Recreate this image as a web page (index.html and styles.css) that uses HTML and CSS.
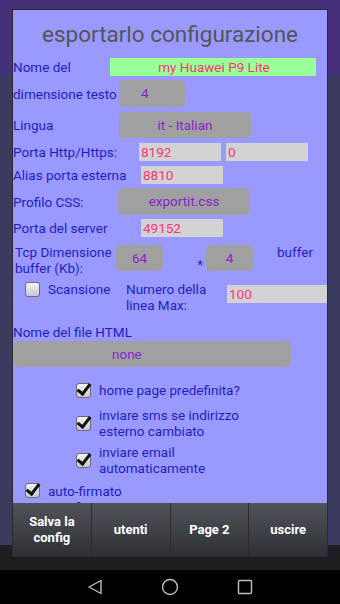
FILE: index.html
```html
<!DOCTYPE html>
<html lang="it">

<head>
    <meta charset="UTF-8">
    <meta name="viewport" content="width=device-width, initial-scale=1.0">
    <title>esportarlo configurazione</title>
    <link rel="stylesheet" href="styles.css">
</head>

<body>
    <div id="screen">
        <div class="backdrop">
            <div class="dialog">
                <div class="dialog-body">
                    <h1 class="dialog-title">esportarlo configurazione</h1>

                    <div class="row row-name">
                        <span class="label">Nome del</span>
                        <span class="field field-green">my Huawei P9 Lite</span>
                    </div>

                    <div class="row row-size">
                        <span class="label">dimensione testo</span>
                        <span class="btn btn-small">4</span>
                    </div>

                    <div class="row row-lang">
                        <span class="label">Lingua</span>
                        <span class="btn btn-wide">it - Italian</span>
                    </div>

                    <div class="row row-http">
                        <span class="label">Porta Http/Https:</span>
                        <span class="field field-port">8192</span>
                        <span class="field field-port field-second">0</span>
                    </div>

                    <div class="row row-alias">
                        <span class="label">Alias porta esterna</span>
                        <span class="field field-port">8810</span>
                    </div>

                    <div class="row row-css">
                        <span class="label">Profilo CSS:</span>
                        <span class="btn btn-wide">exportit.css</span>
                    </div>

                    <div class="row row-server">
                        <span class="label">Porta del server</span>
                        <span class="field field-port">49152</span>
                    </div>

                    <div class="row row-tcp">
                        <span class="label">Tcp Dimensione buffer (Kb):</span>
                        <span class="btn btn-tcp">64</span>
                        <span class="times">*</span>
                        <span class="btn btn-tcp">4</span>
                        <span class="label-buffer">buffer</span>
                    </div>

                    <div class="row row-scan">
                        <span class="check"></span>
                        <span class="label label-scan">Scansione</span>
                        <span class="label label-lines">Numero della linea Max:</span>
                        <span class="field field-lines">100</span>
                    </div>

                    <div class="html-label">Nome del file HTML</div>
                    <div class="btn btn-html">none</div>

                    <div class="options">
                        <div class="option">
                            <span class="check checked"></span>
                            <span class="option-text">home page predefinita?</span>
                        </div>
                        <div class="option option-sms">
                            <span class="check checked"></span>
                            <span class="option-text">inviare sms se indirizzo<br>esterno cambiato</span>
                        </div>
                        <div class="option option-mail">
                            <span class="check checked"></span>
                            <span class="option-text">inviare email<br>automaticamente</span>
                        </div>
                        <div class="option option-left">
                            <span class="check checked"></span>
                            <span class="option-text">auto-firmato<br>certificato??</span>
                        </div>
                    </div>
                </div>

                <div class="dialog-buttons">
                    <button class="action">Salva la<br>config</button>
                    <button class="action">utenti</button>
                    <button class="action">Page 2</button>
                    <button class="action">uscire</button>
                </div>
            </div>
        </div>

        <div class="navbar">
            <svg width="16" height="16" viewBox="0 0 16 16">
                <path d="M14 1.5 L2 8 L14 14.5 Z" fill="none" stroke="#bdbdbd" stroke-width="1.4" stroke-linejoin="round" />
            </svg>
            <svg width="18" height="18" viewBox="0 0 18 18">
                <circle cx="9" cy="9" r="7.5" fill="none" stroke="#bdbdbd" stroke-width="1.4" />
            </svg>
            <svg width="16" height="16" viewBox="0 0 16 16">
                <rect x="1.5" y="1.5" width="13" height="13" rx="1" fill="none" stroke="#bdbdbd" stroke-width="1.4" />
            </svg>
        </div>
    </div>
</body>

</html>
```

FILE: styles.css
```css
body {
    margin: 0;
    font-family: Roboto, "Liberation Sans", sans-serif;
    background-color: #000;
}

#screen {
    width: 340px;
    height: 604px;
    overflow: hidden;
}

.backdrop {
    height: 561px;
    padding: 9px 12px 0;
    background: linear-gradient(#45307a 0, #45307a 75px, #3b3b5d 75px, #3b3b5d 545px, #1e1f22 545px);
}

.dialog {
    width: 314px;
    border: 1px solid #2b2b2e;
    background-color: #2b2b2e;
}

.dialog-body {
    height: 493px;
    overflow: hidden;
    background-color: #9999ff;
    color: #1f1fbf;
    font-size: 13.5px;
}

.dialog-title {
    margin: 0;
    height: 48px;
    line-height: 48px;
    text-align: center;
    font-size: 22.5px;
    font-weight: normal;
    color: #555;
}

.row {
    display: flex;
    align-items: center;
}

.label {
    flex: none;
    line-height: 16px;
}

.field {
    height: 18px;
    line-height: 18px;
    color: #ff3377;
    background-color: #d3d3d3;
    padding-left: 2px;
    box-sizing: border-box;
}

.btn {
    height: 26px;
    line-height: 26px;
    border-radius: 5px;
    background-color: #a0a0a0;
    color: #8a1fd0;
    text-align: center;
    box-sizing: border-box;
}

.row-name {
    height: 18px;
}

.row-name .label {
    width: 97px;
}

.field-green {
    width: 206px;
    background-color: #99ff99;
    text-align: center;
}

.row-size {
    margin-top: 4px;
    height: 27px;
}

.row-size .label,
.row-lang .label {
    width: 106px;
}

.btn-small {
    width: 66px;
    height: 27px;
    line-height: 27px;
    text-align: left;
    padding-left: 22px;
}

.row-lang {
    margin-top: 5px;
}

.btn-wide {
    width: 132px;
}

.row-http {
    margin-top: 5px;
    height: 18px;
}

.row-http .label {
    width: 126px;
}

.field-port {
    width: 82px;
}

.field-second {
    margin-left: 5px;
}

.row-alias {
    margin-top: 5px;
    height: 18px;
}

.row-alias .label,
.row-server .label {
    width: 128px;
}

.row-css {
    margin-top: 4px;
    height: 27px;
}

.row-css .label {
    width: 105px;
}

.row-css .btn {
    height: 27px;
    line-height: 27px;
}

.row-server {
    margin-top: 4px;
    height: 18px;
}

.row-tcp {
    margin-top: 8px;
    align-items: flex-start;
    height: 34px;
}

.row-tcp .label {
    width: 101px;
    padding-left: 2px;
    margin-top: -1px;
}

.btn-tcp {
    width: 47px;
}

.times {
    width: 43px;
    text-align: right;
    padding-right: 3px;
    box-sizing: border-box;
    margin-top: 11px;
}

.label-buffer {
    margin-left: 24px;
    margin-top: -1px;
    line-height: 16px;
}

.row-scan {
    height: 32px;
    align-items: flex-start;
}

.row-scan .check {
    margin: 3px 0 0 12px;
}

.label-scan {
    width: 78px;
    margin-left: 8px;
    margin-top: 2px;
}

.label-lines {
    width: 101px;
    margin-top: 2px;
}

.field-lines {
    width: 104px;
    margin-top: 6px;
}

.html-label {
    margin-top: 13px;
    line-height: 16px;
}

.btn-html {
    width: 277px;
    margin: 1px 0 0 1px;
    text-align: left;
    padding-left: 98px;
}

.options {
    margin-top: 15px;
}

.option {
    display: flex;
    align-items: center;
    padding-left: 63px;
    gap: 8px;
}

.option-sms {
    margin-top: 9px;
}

.option-mail {
    margin-top: 5px;
}

.option-left {
    margin-top: 7px;
    padding-left: 12px;
    align-items: flex-start;
}

.option-text {
    line-height: 16px;
}

.check {
    flex: none;
    width: 13px;
    height: 13px;
    border: 1px solid #6a6a7a;
    border-radius: 3px;
    background: linear-gradient(#f4f4f4, #c8c8cc);
    position: relative;
}

.check.checked::after {
    content: "";
    position: absolute;
    left: 3px;
    top: -3px;
    width: 5px;
    height: 11px;
    border-right: 3px solid #111;
    border-bottom: 3px solid #111;
    transform: rotate(38deg);
}

.dialog-buttons {
    display: flex;
    gap: 1px;
    height: 53px;
}

.action {
    flex: 1;
    border: none;
    margin: 0;
    padding: 0;
    color: #fff;
    font-family: Roboto, "Liberation Sans", sans-serif;
    font-size: 13px;
    font-weight: bold;
    line-height: 16px;
    background: linear-gradient(#50545a, #2d3034);
}

.navbar {
    height: 34px;
    background-color: #000;
    display: flex;
    align-items: center;
    justify-content: center;
    gap: 58px;
}
```
